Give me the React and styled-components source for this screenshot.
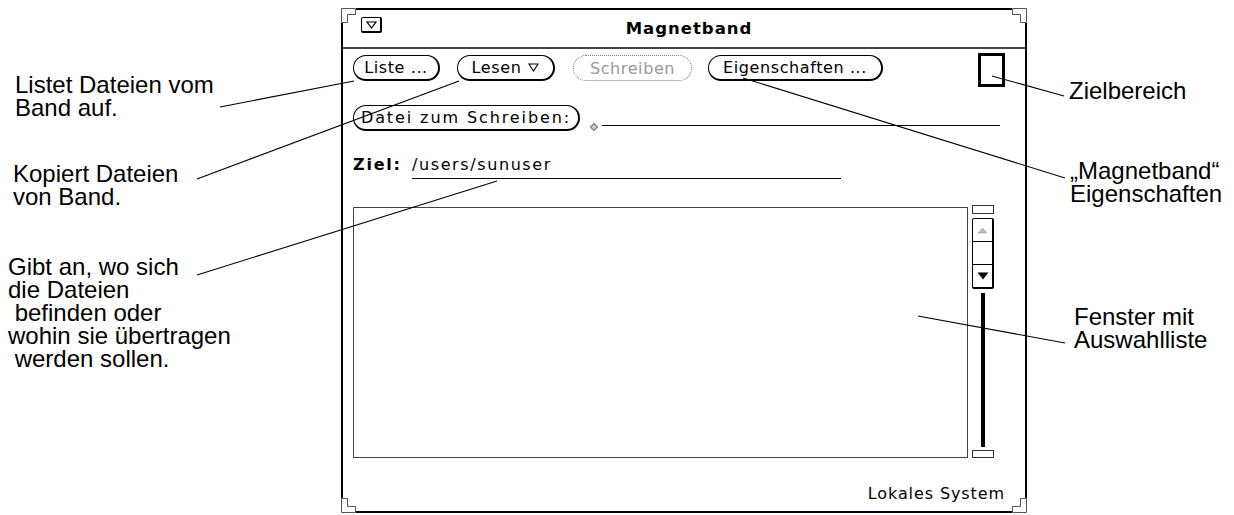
import React from "react";
import styled, { createGlobalStyle, css } from "styled-components";

const Global = createGlobalStyle`
  html, body { margin: 0; padding: 0; background: #fff; }
  body { width: 1234px; height: 515px; overflow: hidden; }
`;

const Page = styled.div`
  position: relative;
  width: 1234px;
  height: 515px;
  display: grid;
  grid-template-columns: 341px 686px 1fr;
  font-family: "Liberation Sans", Arial, sans-serif;
  color: #000;
`;

const Notes = styled.div`
  display: flex;
  flex-direction: column;
  align-items: flex-start;
`;

const Note = styled.div`
  margin-top: ${(p) => p.$top}px;
  padding-left: ${(p) => p.$left}px;
  font-size: 24px;
  line-height: 23px;
  white-space: pre;
`;

const Win = styled.div`
  position: relative;
  margin-top: 8px;
  height: 505px;
  box-sizing: border-box;
  border: 2px solid #000;
  display: flex;
  flex-direction: column;
  font-family: "DejaVu Sans", "Liberation Sans", sans-serif;
  font-size: 16px;
  letter-spacing: 0.8px;
`;

const Corner = styled.svg`
  position: absolute;
  width: 15px;
  height: 15px;
  ${(p) => (p.$top ? "top: -2px;" : "bottom: -2px;")}
  ${(p) => (p.$left ? "left: -2px;" : "right: -2px;")}
  transform: scale(${(p) => (p.$left ? 1 : -1)}, ${(p) => (p.$top ? 1 : -1)});
`;

const Header = styled.div`
  height: 37px;
  border-bottom: 2px solid #444;
  display: grid;
  grid-template-columns: 1fr auto 1fr;
  align-items: center;
`;

const MenuMark = styled.div`
  justify-self: start;
  align-self: start;
  margin: 7px 0 0 18px;
  width: 21px;
  height: 16px;
  box-sizing: border-box;
  border: 1px solid #000;
  border-right-width: 2px;
  border-bottom-width: 2px;
  border-radius: 2px;
  display: flex;
  align-items: center;
  justify-content: center;
`;

const Title = styled.div`
  font-weight: bold;
  font-size: 16.5px;
  letter-spacing: 1px;
  padding-left: 10px;
`;

const Controls = styled.div`
  display: flex;
  flex-direction: column;
  padding: 0 20px 0 10px;
`;

const ButtonRow = styled.div`
  margin-top: 4px;
  height: 34px;
  display: flex;
  align-items: flex-start;
`;

const Btn = styled.div`
  flex: none;
  width: ${(p) => p.$w}px;
  margin-top: ${(p) => p.$mt ?? 2}px;
  margin-left: ${(p) => p.$gap || 0}px;
  height: 26px;
  box-sizing: border-box;
  border: 1px solid #000;
  border-right-width: 2px;
  border-bottom-width: 2px;
  border-radius: 13px;
  display: flex;
  align-items: center;
  justify-content: center;
  gap: 7px;
  white-space: nowrap;
  letter-spacing: ${(p) => p.$ls ?? 0.6}px;
  ${(p) =>
    p.$disabled &&
    css`
      border: 1px dotted #777;
      color: #9a9a9a;
    `}
`;

const DropTarget = styled.div`
  margin-left: auto;
  width: 27px;
  height: 34px;
  box-sizing: border-box;
  border: 3px solid #000;
`;

const DateiRow = styled.div`
  margin-top: 18px;
  height: 26px;
  display: flex;
  align-items: flex-start;
`;

const Diamond = styled.div`
  width: 4px;
  height: 4px;
  margin: 19px 0 0 11px;
  transform: rotate(45deg);
  border: 1px solid #777;
  background: #ccc;
`;

const InputLine = styled.div`
  flex: 1;
  margin: 0 5px 0 5px;
  height: 20px;
  border-bottom: 1px solid #000;
`;

const ZielRow = styled.div`
  margin-top: 26px;
  display: flex;
  align-items: flex-start;
  line-height: 16px;
`;

const FieldLabel = styled.span`
  font-weight: bold;
  width: 59px;
  letter-spacing: 1.8px;
`;

const Field = styled.div`
  width: 429px;
  height: 21px;
  border-bottom: 1px solid #000;
  letter-spacing: 1.6px;
`;

const ListArea = styled.div`
  margin-top: 26px;
  height: 253px;
  display: flex;
  align-items: flex-start;
`;

const ListBox = styled.div`
  margin-top: 2px;
  width: 615px;
  height: 251px;
  box-sizing: border-box;
  border: 1.5px solid #444;
`;

const Scroll = styled.div`
  margin-left: 4px;
  width: 22px;
  height: 253px;
  display: flex;
  flex-direction: column;
  align-items: center;
`;

const Anchor = styled.div`
  width: 22px;
  height: ${(p) => p.$h}px;
  margin-top: ${(p) => p.$mt || 0}px;
  box-sizing: border-box;
  border: 1px solid #333;
`;

const Elevator = styled.div`
  margin-top: 4px;
  width: 22px;
  height: 71px;
  box-sizing: border-box;
  border: 1px solid #000;
  border-right-width: 2px;
  border-bottom-width: 2px;
  border-radius: 2px;
  display: flex;
  flex-direction: column;
`;

const Cell = styled.div`
  flex: 1;
  display: flex;
  align-items: center;
  justify-content: center;
  & + & {
    border-top: 1px solid #000;
  }
`;

const Cable = styled.div`
  margin-top: 4px;
  width: 4px;
  height: 154px;
  background: #000;
`;

const Footer = styled.div`
  margin-top: 28px;
  padding-right: 20px;
  display: flex;
  justify-content: flex-end;
  line-height: 16px;
  letter-spacing: 0.9px;
`;

const Callouts = styled.svg`
  position: absolute;
  left: 0;
  top: 0;
  width: 1234px;
  height: 515px;
  pointer-events: none;
`;

const lines = [
  [220, 107, 354, 81],
  [197, 179, 459, 81],
  [197, 275, 497, 181],
  [743, 78, 1065, 178],
  [992, 76, 1064, 96],
  [918, 316, 1065, 343],
];

function ResizeCorner(props) {
  return (
    <Corner viewBox="0 0 15 15" {...props}>
      <rect x="0" y="0" width="15" height="15" fill="#fff" />
      <path d="M0.5 0.5 H14.5 V6.5 H6.5 V14.5 H0.5 Z" fill="#fff" stroke="#555" strokeWidth="1" />
    </Corner>
  );
}

export default function App() {
  return (
    <>
      <Global />
      <Page>
        <Notes>
          <Note $top={73} $left={15}>{"Listet Dateien vom\nBand auf."}</Note>
          <Note $top={43} $left={13}>{"Kopiert Dateien\nvon Band."}</Note>
          <Note $top={47} $left={8}>
            {"Gibt an, wo sich\ndie Dateien\n befinden oder\nwohin sie übertragen\n werden sollen."}
          </Note>
        </Notes>

        <Win>
          <ResizeCorner $top $left />
          <ResizeCorner $top />
          <ResizeCorner $left />
          <ResizeCorner />
          <Header>
            <MenuMark>
              <svg width="11" height="8" viewBox="0 0 11 8">
                <path d="M1 1 H10 L5.5 7 Z" fill="none" stroke="#000" strokeWidth="1.2" />
              </svg>
            </MenuMark>
            <Title>Magnetband</Title>
            <span />
          </Header>
          <Controls>
            <ButtonRow>
              <Btn $w={87}>Liste ...</Btn>
              <Btn $w={98} $gap={17}>
                Lesen
                <svg width="11" height="9" viewBox="0 0 11 9">
                  <path d="M1 1 H10 L5.5 8 Z" fill="none" stroke="#000" strokeWidth="1.1" />
                </svg>
              </Btn>
              <Btn $w={119} $gap={18} $disabled>Schreiben</Btn>
              <Btn $w={175} $gap={16}>Eigenschaften ...</Btn>
              <DropTarget />
            </ButtonRow>
            <DateiRow>
              <Btn $w={227} $ls={1.9} $mt={0}>Datei zum Schreiben:</Btn>
              <Diamond />
              <InputLine />
            </DateiRow>
            <ZielRow>
              <FieldLabel>Ziel:</FieldLabel>
              <Field>/users/sunuser</Field>
            </ZielRow>
            <ListArea>
              <ListBox />
              <Scroll>
                <Anchor $h={9} />
                <Elevator>
                  <Cell>
                    <svg width="11" height="7" viewBox="0 0 11 7">
                      <path d="M5.5 1 L10 6 H1 Z" fill="#bbb" stroke="#888" strokeWidth="0.8" strokeDasharray="1 1" />
                    </svg>
                  </Cell>
                  <Cell />
                  <Cell>
                    <svg width="12" height="8" viewBox="0 0 12 8">
                      <path d="M0.5 0.5 H11.5 L6 7.5 Z" fill="#000" />
                    </svg>
                  </Cell>
                </Elevator>
                <Cable />
                <Anchor $h={8} $mt={3} />
              </Scroll>
            </ListArea>
          </Controls>
          <Footer>Lokales System</Footer>
        </Win>

        <Notes>
          <Note $top={79} $left={42}>Zielbereich</Note>
          <Note $top={57} $left={43}>{"„Magnetband“\nEigenschaften"}</Note>
          <Note $top={100} $left={47}>{"Fenster mit\nAuswahlliste"}</Note>
        </Notes>

        <Callouts viewBox="0 0 1234 515">
          {lines.map(([x1, y1, x2, y2], i) => (
            <line key={i} x1={x1} y1={y1} x2={x2} y2={y2} stroke="#000" strokeWidth="1.1" />
          ))}
        </Callouts>
      </Page>
    </>
  );
}
